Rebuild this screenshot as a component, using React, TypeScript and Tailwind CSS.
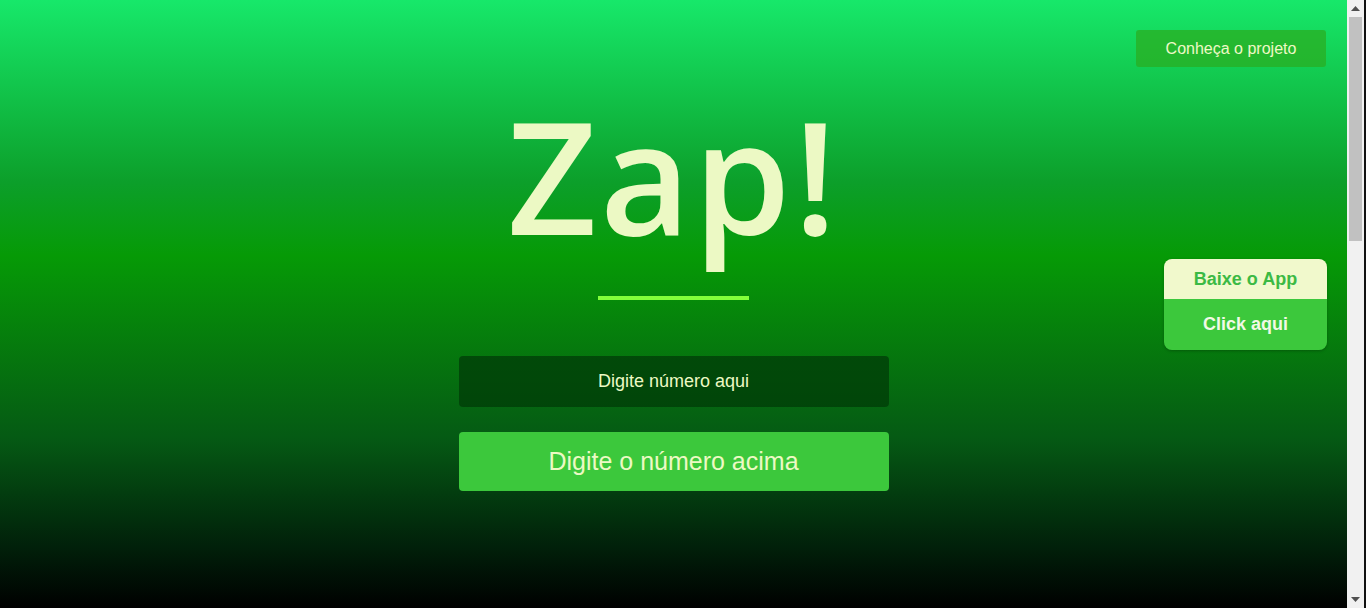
import React from 'react';

function ScrollBar() {
  return (
    <aside className="flex h-[608px] w-[19px] shrink-0">
      <div className="flex w-[17px] flex-col bg-[#f1f1f1]">
        <div className="flex h-[17px] items-center justify-center">
          <svg width="9" height="5" viewBox="0 0 9 5">
            <path d="M0 5 L4.5 0 L9 5 Z" fill="#505050" />
          </svg>
        </div>
        <div className="mx-[2px] h-[224px] bg-[#c1c1c1]" />
        <div className="flex-1" />
        <div className="flex h-[17px] items-center justify-center">
          <svg width="9" height="5" viewBox="0 0 9 5">
            <path d="M0 0 L9 0 L4.5 5 Z" fill="#505050" />
          </svg>
        </div>
      </div>
      <div className="w-[2px] bg-[#111]" />
    </aside>
  );
}

export default function App() {
  return (
    <div className="flex h-[608px] overflow-hidden font-['Liberation_Sans',Arial,sans-serif]">
      <section className="relative flex-1 bg-[linear-gradient(180deg,#17e86a_0%,#0c9f2a_30%,#069a06_42%,#055a14_72%,#01200a_90%,#000_100%)]">
        <div className="flex justify-end pt-[30px] pr-[21px]">
          <button className="h-[37px] w-[190px] rounded-[3px] bg-[#2aae22]/75 text-[16px] text-[#eef9c6]">
            Conheça o projeto
          </button>
        </div>

        <div className="flex flex-col items-center">
          <h1 className="mt-[8px] font-['Open_Sans',sans-serif] text-[156px] font-semibold leading-[200px] tracking-[3px] text-[#ecf9c4]">
            Zap!
          </h1>
          <div className="mt-[21px] h-[4px] w-[151px] bg-[#82ff3a]" />

          <input
            type="text"
            placeholder="Digite número aqui"
            className="mt-[56px] h-[51px] w-[430px] rounded-[4px] bg-[#003a06]/75 text-center text-[18px] text-[#ecf9c4] outline-none placeholder:text-[#ecf9c4]"
          />
          <button className="mt-[25px] h-[59px] w-[430px] rounded-[4px] bg-[#3cc83c] text-[25px] text-[#ecf9c4]">
            Digite o número acima
          </button>
        </div>

        {/* card flutuante */}
        <div className="absolute right-[20px] top-[259px] w-[163px] overflow-hidden rounded-[8px] shadow-[0_1px_3px_rgba(0,0,0,0.25)]">
          <div className="flex h-[40px] items-center justify-center bg-[#f1f9cc] text-[18px] font-bold text-[#3cba44]">
            Baixe o App
          </div>
          <div className="flex h-[51px] items-center justify-center bg-[#3cc83c] text-[18px] font-bold text-[#f1f9e6]">
            Click aqui
          </div>
        </div>
      </section>

      <ScrollBar />
    </div>
  );
}
